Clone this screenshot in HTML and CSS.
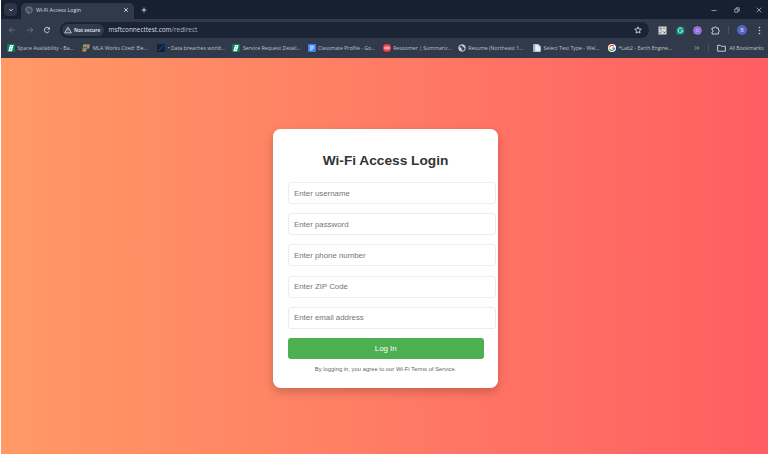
FILE: index.html
```html
<!DOCTYPE html>
<html lang="en">
<head>
<meta charset="utf-8">
<title>Wi-Fi Access Login</title>
<link rel="stylesheet" href="styles.css">
</head>
<body>
<div class="browser">
  <header class="tabs">
    <span class="tab-search"><svg viewBox="0 0 8 8" width="8" height="8"><path d="M2.200 3.200 4 4.900l1.800-1.700" class="line"/></svg></span>
    <div class="tab">
      <svg viewBox="0 0 8 8" width="8" height="8"><circle cx="4" cy="4" r="3.300" fill="#3c4655" stroke="#7e8795" stroke-width=".8"/><path d="M1 3c1 0 2 .3 2 1s1 .8.8 1.700L3.600 7M4 .8c-.6 1 .5 1.400 1.300 1.500s.4 1.500 2 1.300" fill="none" stroke="#7e8795" stroke-width=".8"/></svg>
      <span class="tab-title">Wi-Fi Access Login</span>
      <svg class="close" viewBox="0 0 6 6" width="6" height="6"><path d="m1.200 1.200 3.600 3.600m0-3.600L1.200 4.800" class="line"/></svg>
    </div>
    <svg class="new-tab" viewBox="0 0 6 6" width="6" height="6"><path d="M3 .6v4.800M.6 3h4.800" class="line"/></svg>
    <div class="window-buttons">
      <svg viewBox="0 0 6 6" width="6" height="6"><path d="M.5 3.500h5" class="thin"/></svg>
      <svg viewBox="0 0 6 6" width="6" height="6"><path d="M.8 2h3.200v3.200H.8zM2 1.800V.8h3.200V4H4.200" class="thin"/></svg>
      <svg viewBox="0 0 6 6" width="6" height="6"><path d="m.7.700 4.600 4.600m0-4.600L.7 5.300" class="thin"/></svg>
    </div>
  </header>
  <nav class="toolbar">
    <div class="nav-buttons">
      <svg class="dim" viewBox="0 0 8 8" width="8" height="8"><path d="M7 4H1.300M3.900 1.400 1.300 4l2.600 2.600" class="thin"/></svg>
      <svg class="dim" viewBox="0 0 8 8" width="8" height="8"><path d="M1 4h5.700M4.100 1.400 6.700 4 4.100 6.600" class="thin"/></svg>
      <svg viewBox="0 0 8 8" width="8" height="8"><path d="M6.300 5.200A2.600 2.600 0 1 1 6 2.300" class="line"/><path d="M6.800.9v2.600H4.200z" fill="#d5d9e0"/></svg>
    </div>
    <div class="address">
      <span class="security"><svg viewBox="0 0 8 8" width="8" height="8"><path d="M4 1.200 7.300 6.900H.7z" class="line"/><path d="M4 3.200v1.700M4 5.500v.6" class="thin"/></svg><b>Not secure</b></span>
      <span class="url">msftconnecttest.com<span class="path">/redirect</span></span>
      <svg class="star" viewBox="0 0 8 8" width="8" height="8"><path d="m4 .8.900 2.200 2.400.2-1.800 1.600.5 2.300L4 5.900 2 7.100l.5-2.300L.7 3.200l2.400-.2z" class="line"/></svg>
    </div>
    <div class="extensions">
      <svg viewBox="0 0 9 9" width="9" height="9"><rect x=".5" y=".5" width="8" height="8" fill="#d9dad6"/><path d="M1.500 2.200h2.300M2.200 3.600l1.600 1.600M6 1.500v1.500M1.500 6.800h1.500M5.600 5.600l1.600 1.600m0-1.600L5.600 7.200" fill="none" stroke="#41464b" stroke-width=".8"/></svg>
      <svg viewBox="0 0 9 9" width="9" height="9"><path d="M4.500.5a4 4 0 1 1 0 8h-4v-4a4 4 0 0 1 4-4z" fill="#159578"/><path d="M6.300 3A2.300 2.300 0 1 0 6.700 4.900H4.800" fill="none" stroke="#e0f6ed" stroke-width=".9"/></svg>
      <svg viewBox="0 0 9 9" width="9" height="9"><circle cx="4.500" cy="4.500" r="3.800" fill="#8150e8" stroke="#cdb9f5" stroke-width=".7"/><circle cx="4.500" cy="4.500" r="1.700" fill="#9a6cf2" stroke="#dccbff" stroke-width=".7"/></svg>
      <svg viewBox="0 0 9 9" width="9" height="9"><path d="M1 2h2.200c0-1.600 2.200-1.600 2.200 0h2v2c1.300 0 1.300 2 0 2v2H1V6.200c1.500 0 1.500-2.200 0-2.200z" class="line"/></svg>
      <i class="divider"></i>
      <span class="avatar">B</span>
      <svg class="dots" viewBox="0 0 3 9" width="3" height="9"><g fill="#cbd0d8"><circle cx="1.500" cy="1.500" r=".8"/><circle cx="1.500" cy="4.500" r=".8"/><circle cx="1.500" cy="7.500" r=".8"/></g></svg>
    </div>
  </nav>
  <nav class="bookmarks">
    <div class="bookmark"><svg viewBox="0 0 8 8" width="8" height="8"><rect width="8" height="8" rx="1" fill="#087c5b"/><path d="M2.900.9h3.700L5.800 3.900 5 7.200H1.300z" fill="#fff"/><path d="M3.700 2.400h1.200M3.100 5.300h1.100" stroke="#087c5b" stroke-width=".9"/></svg><span>Space Availability - Ba...</span></div>
    <div class="bookmark"><svg viewBox="0 0 8 8" width="8" height="8"><path d="M1.200.5h6.500L7 4.500H4.800L4 7.500H.3z" fill="#b8a36b"/><path d="M2.300 1.500 1.600 6.500M4.300 1.500 3.500 6M6 1.500 5.600 3.300M1.200 3.500h4" stroke="#4a4638" stroke-width=".6"/></svg><span>MLA Works Cited: Ele...</span></div>
    <div class="bookmark"><svg viewBox="0 0 8 8" width="8" height="8"><rect width="8" height="8" fill="#0b2340"/><path d="M1 6.500C4 6 4 2 7.500 1.500" fill="none" stroke="#315675" stroke-width=".8"/></svg><span>• Data breaches world...</span></div>
    <div class="bookmark"><svg viewBox="0 0 8 8" width="8" height="8"><rect width="8" height="8" rx="1" fill="#087c5b"/><path d="M2.900.9h3.700L5.800 3.900 5 7.200H1.300z" fill="#fff"/><path d="M3.700 2.400h1.200M3.100 5.300h1.100" stroke="#087c5b" stroke-width=".9"/></svg><span>Service Request Detail...</span></div>
    <div class="bookmark"><svg viewBox="0 0 8 8" width="8" height="8"><rect width="8" height="8" rx=".8" fill="#3980f4"/><path d="M1.700 2.200h4.600M1.700 4h4.600M1.700 5.800h3" stroke="#fff" stroke-width=".9"/></svg><span>Classmate Profile - Go...</span></div>
    <div class="bookmark"><svg viewBox="0 0 8 8" width="8" height="8"><circle cx="4" cy="4" r="4" fill="#ed4144"/><g fill="none" stroke="#ffe1dc" stroke-width=".8"><circle cx="2.700" cy="4" r="1.200"/><circle cx="5.300" cy="4" r="1.200"/></g></svg><span>Resoomer | Summariz...</span></div>
    <div class="bookmark"><svg viewBox="0 0 8 8" width="8" height="8"><circle cx="4" cy="4" r="3.300" fill="#39424f" stroke="#d9dce0" stroke-width=".9"/><path d="M.8 3.200c1.300 0 2.500.3 2.500 1.100s1 .8.600 2.700L1.500 6zM3.800.8c-.6 1.200.5 1.400 1.200 1.600s.3 1.500 2.300 1.300L6 1.200z" fill="#d9dce0"/></svg><span>Resume (Northeast 1...</span></div>
    <div class="bookmark"><svg viewBox="0 0 8 8" width="8" height="8"><path d="M.3.300h5l2.400 2.400v5H.3z" fill="#e9eff2"/><path d="M.3.300h1.900v7.400H.3z" fill="#8fbcd1"/><path d="M5.300.3v2.400h2.400" fill="#b8c4cb"/></svg><span>Select Test Type - Wel...</span></div>
    <div class="bookmark"><svg viewBox="0 0 8 8" width="8" height="8"><circle cx="4" cy="4" r="4" fill="#fff"/><g fill="none" stroke-width="1.200"><path d="M1.700 3A2.500 2.500 0 0 1 5.900 2.300" stroke="#ea4335"/><path d="M1.700 3a2.500 2.500 0 0 0 0 2" stroke="#fbbc05"/><path d="M1.700 5a2.500 2.500 0 0 0 3.800 1" stroke="#34a853"/><path d="M5.500 6a2.500 2.500 0 0 0 1-1.900H4" stroke="#4285f4"/></g></svg><span>*Lab2 - Earth Engine...</span></div>
    <svg class="more" viewBox="0 0 6 6" width="6" height="6"><path d="m.8 1.200 1.800 1.800L.8 4.800M3.300 1.200l1.800 1.800-1.800 1.800" class="thin"/></svg>
    <i class="divider"></i>
    <div class="all"><svg viewBox="0 0 9 8" width="9" height="8"><path d="M.6 1.300h2.800l.9 1h4.100v4.900H.6z" class="line"/></svg><span>All Bookmarks</span></div>
  </nav>
</div>
<main>
  <form class="card">
    <h1>Wi-Fi Access Login</h1>
    <input type="text" placeholder="Enter username">
    <input type="password" placeholder="Enter password">
    <input type="text" placeholder="Enter phone number">
    <input type="text" placeholder="Enter ZIP Code">
    <input type="text" placeholder="Enter email address">
    <button type="button">Log In</button>
    <p>By logging in, you agree to our Wi-Fi Terms of Service.</p>
  </form>
</main>
</body>
</html>
```
FILE: styles.css
```css
* { box-sizing: border-box; }
body {
  margin: 0;
  width: 768px;
  height: 454px;
  padding-left: 1px;
  overflow: hidden;
  background: #fff;
  font-family: "Liberation Sans", Arial, sans-serif;
}
svg { display: block; flex: none; }
.line { fill: none; stroke: #d5d9e0; stroke-width: .9; }
.thin { fill: none; stroke: #c3c8d1; stroke-width: .7; }
.dim { opacity: .5; }
.browser {
  height: 58px;
  background: #303a4a;
  color: #d7dbe2;
  font: 6px/8px "Open Sans", "Noto Sans", sans-serif;
}
.tabs {
  height: 19px;
  display: flex;
  align-items: center;
  background: #172031;
}
.tab-search {
  width: 13px;
  height: 13px;
  margin-left: 3px;
  border-radius: 4px;
  background: #2b3545;
  display: grid;
  place-items: center;
}
.tab {
  width: 113px;
  height: 16px;
  margin: 3px 0 0 4px;
  padding: 0 5px 2px 4px;
  display: flex;
  align-items: center;
  border-radius: 5px 5px 0 0;
  background: #303a4a;
}
.tab-title { margin-left: 3px; font-size: 5.350px; white-space: nowrap; }
.close { margin-left: auto; }
.new-tab { margin-left: 7px; }
.window-buttons { display: flex; gap: 16.500px; margin: 0 6px 0 auto; }
.toolbar { height: 20px; display: flex; align-items: center; padding-top: 2px; }
.nav-buttons { display: flex; gap: 9.500px; width: 59px; padding-left: 7px; }
.address {
  width: 589px;
  height: 16px;
  padding: 0 7px 0 2px;
  border-radius: 8px;
  background: #1b2434;
  display: flex;
  align-items: center;
  flex: none;
}
.security {
  width: 42px;
  height: 12px;
  padding-left: 2px;
  border-radius: 6px;
  background: #303a4a;
  display: flex;
  align-items: center;
  gap: 2px;
  font-size: 4.850px;
  white-space: nowrap;
  flex: none;
}
.url { margin-left: 4.500px; font-size: 6.430px; white-space: nowrap; }
.path { color: #aab1bd; }
.star { margin-left: auto; }
.extensions { flex: 1; display: flex; align-items: center; padding-left: 9px; gap: 8.700px; }
.divider { width: 1px; height: 8px; background: #485365; flex: none; }
.extensions .divider { margin: 0 -1px 0 -.5px; }
.avatar {
  width: 10px;
  height: 10px;
  border-radius: 50%;
  background: #5265c4;
  text-align: center;
  font-size: 5.500px;
  line-height: 10px;
  flex: none;
}
.dots { margin-left: 2px; }
.bookmarks {
  height: 18px;
  display: flex;
  align-items: center;
  padding-left: 6px;
  font-size: 5.200px;
  color: #bdc3cd;
}
.bookmark { width: 75.130px; display: flex; align-items: center; gap: 2.500px; white-space: nowrap; flex: none; }
.more { margin-left: 11px; }
.bookmarks .divider { margin-left: 8px; }
.all { margin-left: 8px; display: flex; gap: 3px; align-items: center; white-space: nowrap; }
main {
  height: 396px;
  background: linear-gradient(90deg, #ff9966, #ff5e62);
  display: flex;
  align-items: flex-start;
  padding: 70.500px 0 0 272.500px;
}
.card {
  width: 224.500px;
  height: 259px;
  margin-left: -.2px;
  padding: 24px 14.700px 0;
  border-radius: 7.500px;
  background: #fff;
  box-shadow: 0 4px 10px rgba(0, 0, 0, .2);
  text-align: center;
}
h1 { margin: 0 0 14.500px; font-size: 13.700px; line-height: 15px; color: #333; }
input {
  display: block;
  width: 208px;
  height: 22px;
  margin: 0 0 9.200px;
  padding: 0 5px;
  border: 1px solid #ececec;
  border-radius: 3px;
  font: 7.850px "Liberation Sans", Arial, sans-serif;
}
input::placeholder { color: #757575; }
button {
  display: block;
  width: 195.500px;
  height: 21px;
  margin: 0;
  padding: 0;
  border: 0;
  border-radius: 3px;
  background: #4caf50;
  color: #fff;
  font: 7.900px "Liberation Sans", Arial, sans-serif;
}
p { margin: 7px 0 0; font-size: 5.870px; line-height: 7px; color: #666; white-space: nowrap; }
```
